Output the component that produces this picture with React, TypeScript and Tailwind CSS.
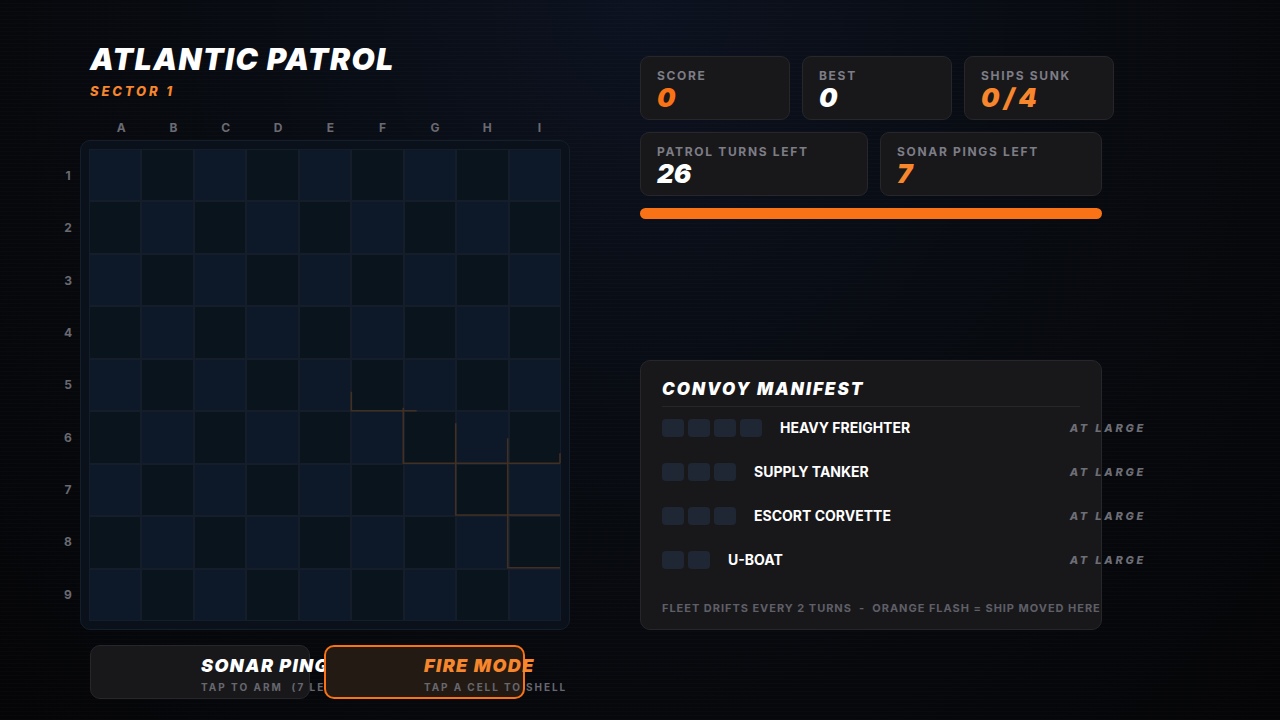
import React from "react";

const COLS = ["A", "B", "C", "D", "E", "F", "G", "H", "I"];
const ROWS = [1, 2, 3, 4, 5, 6, 7, 8, 9];

function StatCard({ label, value, valueClass, width }: { label: string; value: string; valueClass: string; width: string }) {
  return (
    <div className={`${width} h-[64px] rounded-[9px] border border-[#26262b] bg-[#18181b] pl-4 pt-[12px]`}>
      <div className="text-[12px] leading-[14px] font-bold tracking-[0.14em] text-[#7d7d86]">{label}</div>
      <div className={`mt-[1px] text-[26px] leading-[28px] font-black italic ${valueClass}`}>{value}</div>
    </div>
  );
}

function ShipRow({ n, name }: { n: number; name: string }) {
  return (
    <div className="flex items-center w-[484px] h-[44px]">
      <div className="flex gap-[4px]">
        {Array.from({ length: n }).map((_, i) => (
          <div key={i} className="w-[22px] h-[18px] rounded-[4px] bg-[#1f2735]" />
        ))}
      </div>
      <div className="ml-[18px] flex-1 text-[14px] leading-[18px] font-bold text-white">{name}</div>
      <div className="text-[11px] font-extrabold italic tracking-[0.25em] text-[#6e6e76]">AT LARGE</div>
    </div>
  );
}

export default function App() {
  return (
    <div
      className="relative w-[1280px] h-[720px] overflow-hidden bg-[radial-gradient(ellipse_at_50%_0%,#0c1220_0%,#080b11_45%,#050507_100%)]"
      style={{ fontFamily: "Inter, 'Noto Sans', sans-serif" }}
    >
      <div className="pointer-events-none absolute inset-0 bg-[repeating-linear-gradient(0deg,rgba(255,255,255,0.012)_0px,rgba(255,255,255,0.012)_1px,transparent_1px,transparent_4px)]" />
      <div className="relative flex">
        {/* Left column */}
        <div className="ml-[56px] flex flex-col">
          <div className="ml-[34px] mt-[42px] text-[30px] leading-[34px] font-black italic tracking-[0.05em] text-white">ATLANTIC PATROL</div>
          <div className="ml-[34px] mt-[7px] text-[13px] leading-[16px] font-extrabold italic tracking-[0.22em] text-[#f7862c]">SECTOR 1</div>
          <div className="ml-[39px] mt-[21px] flex h-[16px] items-center">
            {COLS.map((c) => (
              <div key={c} className="w-[52.3px] text-center text-[12px] font-bold text-[#6a6a72]">{c}</div>
            ))}
          </div>
          <div className="mt-[4px] flex">
            <div className="flex w-[24px] flex-col pt-[10px]">
              {ROWS.map((r) => (
                <div key={r} className="flex h-[52.3px] items-center justify-center text-[12px] font-bold text-[#6a6a72]">{r}</div>
              ))}
            </div>
            <div className="w-[490px] h-[490px] rounded-[10px] border border-[#151e2b] bg-[#0a111a] p-[8px]">
              <div className="relative grid grid-cols-9 w-[472px] h-[472px]">
                {ROWS.map((r) =>
                  COLS.map((c, ci) => (
                    <div
                      key={`${r}${c}`}
                      className={`border-[0.5px] border-[#141d29] ${(r - 1 + ci) % 2 === 0 ? "bg-[#0d1929]" : "bg-[#0a141d]"}`}
                    />
                  ))
                )}
                <svg className="pointer-events-none absolute inset-0" width="472" height="472" viewBox="0 0 472 472">
                  <g stroke="#4a3424" strokeWidth="1.6" fill="none" opacity="0.85">
                    <path d="M262.3 242.7 V261.7 H327.7" />
                    <path d="M314.3 258.7 V314.3 H471" />
                    <path d="M366.7 274.3 V366 H471" />
                    <path d="M418.7 289.3 V418.7 H471" />
                    <path d="M471 304.3 V314.3" />
                  </g>
                </svg>
              </div>
            </div>
          </div>
          <div className="relative ml-[34px] mt-[15px] h-[54px]">
            <div className="absolute left-0 top-0 w-[220px] h-[54px] rounded-[10px] border border-[#26262b] bg-[#18181b] pl-[110px] pt-[9px] whitespace-nowrap">
              <div className="text-[18px] leading-[22px] font-black italic tracking-[0.08em] text-white">SONAR PING</div>
              <div className="mt-[3px] text-[10px] leading-[14px] font-bold tracking-[0.2em] text-[#67676f]">TAP TO ARM&nbsp;&nbsp;(7 LEFT)</div>
            </div>
            <div className="absolute left-[234px] top-0 w-[201px] h-[54px] rounded-[10px] border-2 border-[#f97316] bg-[#231a14] pl-[98px] pt-[8px] whitespace-nowrap">
              <div className="text-[18px] leading-[22px] font-black italic tracking-[0.08em] text-[#f7862c]">FIRE MODE</div>
              <div className="mt-[3px] text-[10px] leading-[14px] font-bold tracking-[0.19em] text-[#67676f]">TAP A CELL TO SHELL</div>
            </div>
          </div>
        </div>

        {/* Right column */}
        <div className="ml-[70px] mt-[56px] flex flex-col">
          <div className="flex gap-[12px]">
            <StatCard label="SCORE" value="0" valueClass="text-[#f97316]" width="w-[150px]" />
            <StatCard label="BEST" value="0" valueClass="text-white" width="w-[150px]" />
            <StatCard label="SHIPS SUNK" value="0/4" valueClass="text-[#f7862c] tracking-[0.16em]" width="w-[150px]" />
          </div>
          <div className="mt-[12px] flex gap-[12px]">
            <StatCard label="PATROL TURNS LEFT" value="26" valueClass="text-white" width="w-[228px]" />
            <StatCard label="SONAR PINGS LEFT" value="7" valueClass="text-[#f7862c]" width="w-[222px]" />
          </div>
          <div className="mt-[12px] h-[11px] w-[462px] rounded-full bg-[#f97316]" />

          <div className="mt-[141px] w-[462px] h-[270px] rounded-[10px] border border-[#26262b] bg-[#18181b] pl-[21px] pt-[17px]">
            <div className="text-[17px] leading-[22px] font-black italic tracking-[0.12em] text-white">CONVOY MANIFEST</div>
            <div className="mt-[6px] h-px w-[418px] bg-[#26262b]" />
            <div className="mt-[-1px] flex flex-col">
              <ShipRow n={4} name="HEAVY FREIGHTER" />
              <ShipRow n={3} name="SUPPLY TANKER" />
              <ShipRow n={3} name="ESCORT CORVETTE" />
              <ShipRow n={2} name="U-BOAT" />
            </div>
            <div className="mt-[18px] whitespace-nowrap text-[11px] font-bold tracking-[0.088em] text-[#5f5f67]">FLEET DRIFTS EVERY 2 TURNS&nbsp;&nbsp;-&nbsp;&nbsp;ORANGE FLASH = SHIP MOVED HERE</div>
          </div>
        </div>
      </div>
    </div>
  );
}
